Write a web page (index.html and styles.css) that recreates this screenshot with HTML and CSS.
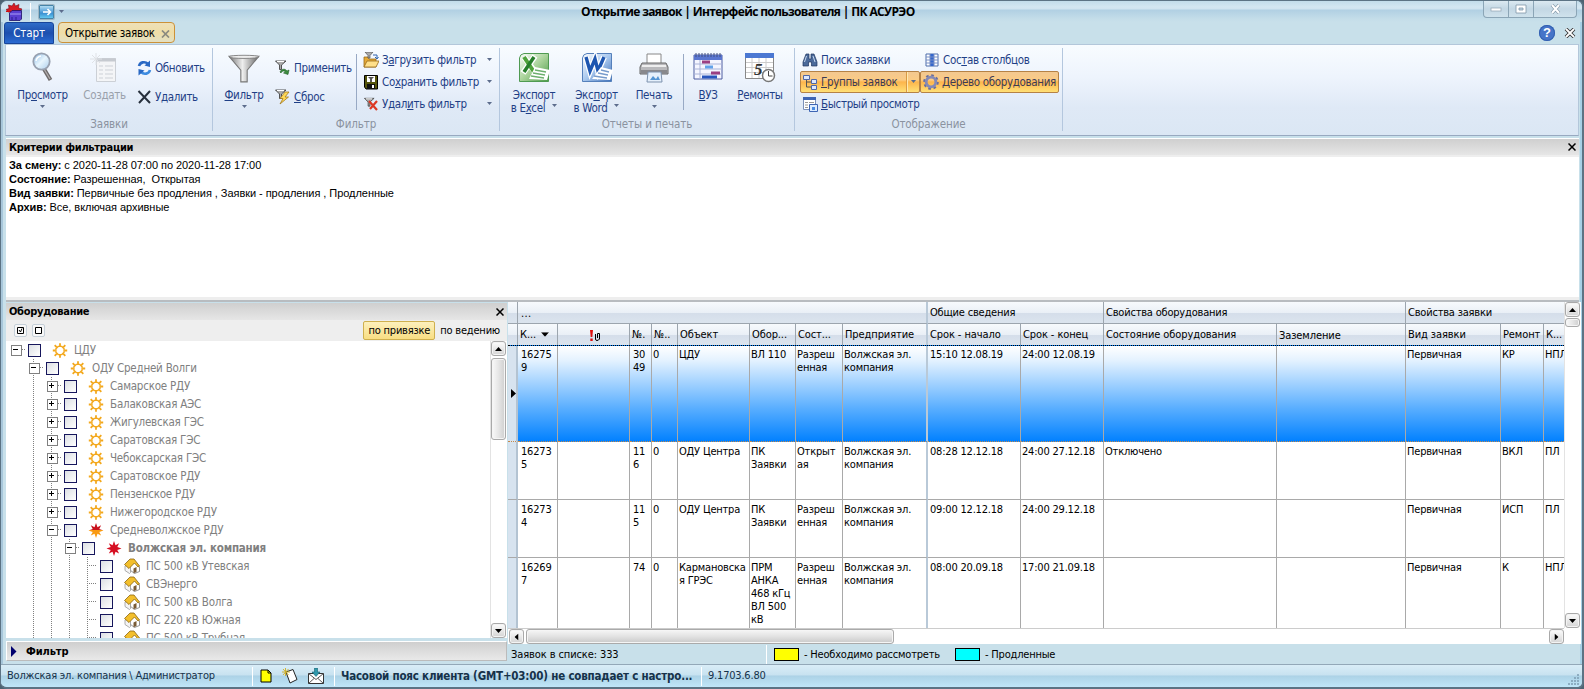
FILE: index.html
```html
<!DOCTYPE html>
<html lang="ru">
<head>
<meta charset="utf-8">
<title>Открытие заявок | Интерфейс пользователя | ПК АСУРЭО</title>
<link rel="stylesheet" href="styles.css">
</head>
<body>
<svg class="defs" width="0" height="0" aria-hidden="true">
  <defs>
    <linearGradient id="metal" x1="0" x2="1"><stop offset="0" stop-color="#777"/><stop offset=".45" stop-color="#eee"/><stop offset="1" stop-color="#666"/></linearGradient>
    <linearGradient id="glass" x1="0" y1="0" x2="1" y2="1"><stop offset="0" stop-color="#8bbce8"/><stop offset=".5" stop-color="#e8f5fd"/><stop offset="1" stop-color="#a9cdec"/></linearGradient>
    <linearGradient id="xl" x1="0" y1="0" x2="1" y2="1"><stop offset="0" stop-color="#fff"/><stop offset=".5" stop-color="#a9d39a"/><stop offset="1" stop-color="#4c9a49"/></linearGradient>
    <linearGradient id="wd" x1="0" y1="0" x2="1" y2="1"><stop offset="0" stop-color="#fff"/><stop offset=".5" stop-color="#a9c8ee"/><stop offset="1" stop-color="#3e6fb8"/></linearGradient>
    <linearGradient id="duo" x1="0" y1="0" x2="0" y2="1"><stop offset=".5" stop-color="#c8101c"/><stop offset=".5" stop-color="#f99a12"/></linearGradient>
    <symbol id="sun" viewBox="0 0 15 15"><path d="M7.500 3V.3m0 11.700v2.700M3 7.500H.3M12 7.500h2.700M4.300 4.300 2.200 2.200m8.500 8.500 2.100 2.100m-8.500-2.100-2.100 2.100m8.500-8.500 2.100-2.100" stroke="#f3a81c" stroke-width="1.800"/><path d="M5.700 3.400h3.600l2.300 2.300v3.600l-2.300 2.300H5.700L3.400 9.300V5.700Z" fill="#fff" stroke="#f3a81c" stroke-width="1.400"/></symbol>
    <symbol id="star" viewBox="0 0 15 15"><path d="M7.500 0 9 4.200 12.600 2.300 10.800 6 15 7.500 10.800 9 12.600 12.600 9 10.800 7.500 15 6 10.800 2.300 12.600 4.200 9 0 7.500 4.200 6 2.300 2.300 6 4.200Z"/></symbol>
    <symbol id="house" viewBox="0 0 16 16"><path d="M6 8 11 4 15.500 9v4.500l-5 2L6 12Z" fill="#fff" stroke="#777" stroke-width=".8"/><path d="M1 8v4.500l4.500 3 1-1V10L4 7Z" fill="#f4f4f4" stroke="#999" stroke-width=".8"/><path d="M.5 6.500 6 1h4L15.500 8 14 9 10.500 5 5 10.500Z" fill="#f3bf2c" stroke="#8a6410" stroke-width=".8"/><path d="M9.500 10.500 12.500 9v5l-3 1.200Z" fill="#795b35"/></symbol>
    <symbol id="funnel" viewBox="0 0 30 28"><path d="M1 2 12 15v11h6V15L29 2Z" fill="url(#metal)" stroke="#777"/><ellipse cx="15" cy="2.500" rx="14" ry="1.500" fill="#eee" stroke="#777" stroke-width=".8"/></symbol>
    <symbol id="fun" viewBox="0 0 12 10"><path d="M.5 1 4.500 5v4.500h2V5L11 1Z" fill="#aaa" stroke="#444" stroke-width=".9"/><path d="M2 1.500h7" stroke="#fff"/></symbol>
    <symbol id="down" viewBox="0 0 5 4"><path d="M0 0h5L2.500 3Z" fill="#5c6c8c"/></symbol>
    <symbol id="tri" viewBox="0 0 7 4"><path d="M0 4h7L3.500 0Z"/></symbol>
    <symbol id="cross" viewBox="0 0 8 8"><path d="m.5.5 7 7m0-7-7 7" fill="none" stroke="#000" stroke-width="1.500"/></symbol>
  </defs>
</svg>
<div class="window">
  <header class="titlebar">
    <div class="quick">
      <svg width="17" height="18" viewBox="0 0 17 18"><path d="m8 0 1.500 3L13 1.500 12.500 5 16 6l-2.500 3H2L0 6.500 3 5.500 2.500 2 6 3Z" fill="#d61a22" stroke="#7c0c18" stroke-width=".6"/><path d="M0 8.500h4" stroke="#c11"/><path d="M3.500 10 6 7.500h9.500V16l-1.500 1.500H3.500Z" fill="#5a3fd0" stroke="#1c1266" stroke-width=".8"/><path d="M4 11h11" stroke="#a99cf4"/><path d="M6 14v3m4-3v3" stroke="#2a1a90"/></svg>
      <span class="vline"></span>
      <span class="quick-btn"><svg width="12" height="10" viewBox="0 0 12 10"><path d="M2 5h7M6.500 2l3 3-3 3" fill="none" stroke="#fff" stroke-width="1.600"/></svg></span>
      <svg width="5" height="4"><use href="#down"/></svg>
    </div>
    <h1 class="title">Открытие заявок | Интерфейс пользователя | ПК АСУРЭО</h1>
    <div class="sysbuttons">
      <span class="sys"><svg width="12" height="5"><rect x="1" y="1" width="10" height="3" fill="#fff" stroke="#98abb9" stroke-width=".8"/></svg></span>
      <span class="sys"><svg width="12" height="10"><path d="M1 1h10v8H1Zm3 3v2h4V4Z" fill="#fff" fill-rule="evenodd" stroke="#8297a8" stroke-width=".8"/></svg></span>
      <span class="sys wide"><svg width="11" height="10"><path d="m2 1 7 8m0-8L2 9" stroke="#8297a8" stroke-width="3.400"/><path d="m2 1 7 8m0-8L2 9" stroke="#fff" stroke-width="2"/></svg></span>
    </div>
  </header>
  <nav class="tabs">
    <span class="tab-start">Старт</span>
    <span class="tab-page">Открытие заявок<svg width="9" height="8" viewBox="0 0 9 8"><path d="m1 .5 7 7m0-7-7 7" stroke="#8a8a80" stroke-width="1.700"/></svg></span>
    <span class="tabs-end">
      <span class="help">?</span>
      <svg width="12" height="10" viewBox="0 0 12 10"><path d="m2 1 8 8m0-8L2 9" stroke="#333" stroke-width="3.600"/><path d="m2 1 8 8m0-8L2 9" stroke="#fff" stroke-width="1.800"/></svg>
    </span>
  </nav>

  <section class="ribbon">
    <div class="group g-orders">
      <div class="tools">
        <div class="big b-view"><svg width="32" height="31" viewBox="0 0 32 31"><path d="m17 17 6.500 11" stroke="#6e6a6a" stroke-width="4"/><path d="m17 17 6 10" stroke="#b3aeae" stroke-width="1.300"/><circle cx="14.500" cy="9.500" r="8.200" fill="url(#glass)" stroke="#98a1b0" stroke-width="1.800"/><path d="M9 9a6 6 0 0 1 5-5" stroke="#fff" stroke-width="1.500" fill="none"/></svg><span>Пр<u>о</u>смотр</span><svg class="arr" width="5" height="4"><use href="#down"/></svg></div>
        <div class="big b-new off"><svg width="32" height="31" viewBox="0 0 32 31"><path d="M7.500 6.500h19v23h-19Z" fill="#f4f5f7" stroke="#ccd0d6"/><path d="M7 8h20" stroke="#c6cad0" stroke-width="3"/><path d="M10 14h4m2 0h8m-14 4h4m2 0h8m-14 4h4m2 0h8m-14 4h4m2 0h8" stroke="#cdd1d7"/><path d="M7 1v12M1 7h12M3 3l8 8m0-8-8 8" stroke="#dfe2e6"/></svg><span>Создать</span></div>
        <div class="pair p1">
          <div class="small"><svg width="15" height="16" viewBox="0 0 15 16"><path d="M2 6C3 2 8 1 11 4" fill="none" stroke="#2a69c4" stroke-width="2.600"/><path d="M13 .5V7L7.500 5.500Z" fill="#2a69c4"/><path d="M13 10c-1 4-6 5-9 2" fill="none" stroke="#3d8be0" stroke-width="2.600"/><path d="M1.500 15.500V9L7.500 10.500Z" fill="#2a69c4"/></svg><span>Обновить</span></div>
          <div class="small"><svg width="15" height="14" viewBox="0 0 15 14"><path d="m1.500 1 11.500 12M13 1 2 13" stroke="#27303c" stroke-width="2"/></svg><span>Удалить</span></div>
        </div>
      </div>
      <div class="caption">Заявки</div>
    </div>
    <div class="group g-filter">
      <div class="tools">
        <div class="big b-filter"><svg width="32" height="31" viewBox="0 -2 30 29"><use href="#funnel" width="30" height="28"/></svg><span><u>Ф</u>ильтр</span><svg class="arr" width="5" height="4"><use href="#down"/></svg></div>
        <div class="pair p2">
          <div class="small"><svg width="16" height="16"><use href="#fun" width="12" height="10"/><path d="M5 12c1-3 5-4 7-1l2-1-1 4.500L8.500 13l2-1C9 10 7 11 6 13Z" fill="#3b8d3e" stroke="#215f25" stroke-width=".6"/></svg><span>Применить</span></div>
          <div class="small"><svg width="16" height="16"><use href="#fun" width="12" height="10"/><path d="M10 3 5 9.500h3L5 15l8.500-7H10L14 3Z" fill="#ffd956" stroke="#a47a1d" stroke-width=".8"/></svg><span><u>С</u>брос</span></div>
        </div>
        <span class="inner-sep"></span>
        <div class="triple t1">
          <div class="small"><svg width="16" height="16"><path d="M1 5h4l1 2h7v8H1Z" fill="#e5a936" stroke="#98691a" stroke-width=".8"/><path d="M1 15 4 9h12l-3 6Z" fill="#ffe08a" stroke="#98691a" stroke-width=".8"/><path d="M2 0h8L7 3.500V6H5V3.500Z" fill="#aaa" stroke="#555" stroke-width=".7"/><path d="M10 3h4v3m-2-1 2 2 1.500-2" stroke="#2e63ad" fill="none"/></svg><span>З<u>а</u>грузить фильтр</span><svg class="more" width="5" height="4"><use href="#down"/></svg></div>
          <div class="small"><svg width="16" height="16"><path d="M1.500 1.500h13v13.500H3L1.500 13Z" fill="#55550c" stroke="#000"/><path d="M4 2h8v6H4Z" fill="#fff"/><path d="M5 3h6L9 5v3H7V5Z" fill="#555"/><path d="M4 10h8v5H4Z" fill="#111"/><path d="M9 11h2v3H9Z" fill="#fff"/></svg><span>Со<u>х</u>ранить фильтр</span><svg class="more" width="5" height="4"><use href="#down"/></svg></div>
          <div class="small"><svg width="16" height="16"><use href="#fun" x="1" y="1" width="11" height="10"/><path d="m6 5 8 9m0-9-7 8" stroke="#dc3824" stroke-width="2.200"/></svg><span>Удал<u>и</u>ть фильтр</span><svg class="more" width="5" height="4"><use href="#down"/></svg></div>
        </div>
      </div>
      <div class="caption">Фильтр</div>
    </div>
    <div class="group g-reports">
      <div class="tools">
        <div class="big b-xl"><svg width="32" height="31" viewBox="0 0 32 31"><path d="M6 1.500h24.500v28h-29V6Q2 2 6 1.500Z" fill="url(#xl)" stroke="#4f9a52"/><path d="m6 5 11 15M17 4 5 21" stroke="#fff" stroke-width="6"/><path d="m6 5 10 15" stroke="#4fa33b" stroke-width="4"/><path d="M16 5 6 20" stroke="#277f2b" stroke-width="3.500"/><path d="m17 15 15 3-3 10-18-1Z" fill="#fff"/><path d="m17 18 11 2m-13 1 12 2m-14 1 13 2" stroke="#6db06e" stroke-width="1.300"/></svg><span>Экспорт<br>в E<u>x</u>cel<svg class="after" width="5" height="4"><use href="#down"/></svg></span></div>
        <div class="big b-wd"><svg width="32" height="31" viewBox="0 0 32 31"><path d="M6 1.500h24.500v28h-29V6Q2 2 6 1.500Z" fill="url(#wd)" stroke="#5580bb"/><path d="M5 5 9 19l5-12 3 12 6-14" fill="none" stroke="#fff" stroke-width="6"/><path d="M5 5 9 19l5-12 3 12 6-14" fill="none" stroke="#1e56b0" stroke-width="3.400"/><path d="m20 15 12 3-3 10-18-1Z" fill="#fff"/><path d="m20 18 8 2m-11 1 10 2m-14 1 13 2" stroke="#779bcc" stroke-width="1.300"/></svg><span>Экс<u>п</u>орт<br>в Word<svg class="after" width="5" height="4"><use href="#down"/></svg></span></div>
        <div class="big b-print"><svg width="32" height="31" viewBox="0 0 32 31"><path d="M9 2h14v10H9Z" fill="#fff" stroke="#888"/><path d="M4 11h24l2 4v7H2v-7Z" fill="#b9b9bc" stroke="#666"/><path d="M4 14h24" stroke="#eee" stroke-width="2"/><path d="M3 18h26v4H3Z" fill="#88888c"/><path d="M10 20h13l1 10H9Z" fill="#e5f0fc" stroke="#7c91ad"/><path d="m12 28 3-4 3 3 2-3 2 4Z" fill="#5495d4"/></svg><span>Печать</span><svg class="arr" width="5" height="4"><use href="#down"/></svg></div>
        <span class="inner-sep s2"></span>
        <div class="big b-vuz"><svg width="32" height="31" viewBox="0 0 32 31"><path d="M2 3h28v24H2Z" fill="#f5f6ff" stroke="#4c5da0"/><path d="M2 3h28v5H2Z" fill="#5a76d0"/><path d="M4 1v4m3-4v4m3-4v4m3-4v4m3-4v4m3-4v4m3-4v4m3-4v4m3-4v4" stroke="#425083"/><path d="M2 12h28M2 17h28M2 22h28M8 8v19" stroke="#aab4d8"/><path d="M10 10h8m1 11h9" stroke="#9b3f82" stroke-width="3"/><path d="M13 15h8" stroke="#62a2ea" stroke-width="3"/><path d="M10 25h15" stroke="#2855bd" stroke-width="3"/></svg><span><u>В</u>УЗ</span></div>
        <div class="big b-rep"><svg width="32" height="31" viewBox="0 0 32 31"><path d="M1.500 1.500h28v25h-28Z" fill="#fff" stroke="#888"/><path d="M1 1h29v5H1Z" fill="#4b78d2"/><path d="M2 10.500h27m-27 5h27m-27 5h27M8 6v20m7-20v20m7-20v20" stroke="#ccc"/><text x="10" y="23" class="cal-num">5</text><circle cx="24.500" cy="23.500" r="6" fill="#fff" stroke="#777" stroke-width="1.500"/><path d="M24.500 19v5h4" fill="none" stroke="#444"/></svg><span><u>Р</u>емонты</span></div>
      </div>
      <div class="caption">Отчеты и печать</div>
    </div>
    <div class="group g-view">
      <div class="tools">
        <div class="triple t2">
          <div class="small"><svg width="16" height="16"><path d="M4 2h3v5h2V2h3l3 8v4H9.500v-4h-3v4H1v-4Z" fill="#4b6a9a" stroke="#1f355e" stroke-width=".7"/><path d="m4.500 4-2 6m8.500-6 2 6" stroke="#c4d7f0"/></svg><span>Поиск заявки</span></div>
          <div class="small on"><svg width="16" height="16"><path d="M4.500 5v8H9M4.500 8H9" fill="none" stroke="#555"/><path d="M1.500 1.500h6v4h-6ZM9.500 5.500h5v4h-5Zm0 6h5v4h-5Z" fill="#dce8ff" stroke="#5067a5"/></svg><span><u>Г</u>руппы заявок</span><span class="split"><svg width="5" height="4"><use href="#down"/></svg></span></div>
          <div class="small"><svg width="16" height="16"><path d="M1.500 1.500h12v12h-12Z" fill="#fff" stroke="#7b91bb"/><path d="M1 1h13v3H1Z" fill="#3e65b4"/><path d="M3 6.500h3m1 0h5m-9 2.500h3m-3 2.500h3" stroke="#999"/><path d="M7.500 8.500h8v7h-8Z" fill="#dcecff" stroke="#3e65b4"/><path d="M10 11h3v3h-3Z" fill="#4b8be0"/></svg><span><u>Б</u>ыстрый просмотр</span></div>
        </div>
        <div class="triple t3">
          <div class="small"><svg width="16" height="16"><path d="M2 2h12v12H2Z" fill="#fff" stroke="#4d6cab"/><path d="M6 2h4v12H6Z" fill="#3467cc"/><path d="M2 5h12M2 8h12M2 11h12M6 2v12m4-12v12" stroke="#7890c6"/></svg><span>Сос<u>т</u>ав столбцов</span></div>
          <div class="small on"><svg width="16" height="16"><circle cx="8" cy="8" r="6.800" fill="none" stroke="#6a6f9c" stroke-width="2" stroke-dasharray="2.700 2.640"/><circle cx="8" cy="8" r="4.800" fill="none" stroke="#8589b5" stroke-width="2.800"/></svg><span><u>Д</u>ерево оборудования</span></div>
        </div>
      </div>
      <div class="caption">Отображение</div>
    </div>
  </section>

  <section class="criteria">
    <div class="panel-head"><span>Критерии фильтрации</span><svg width="8" height="8"><use href="#cross"/></svg></div>
    <div class="criteria-body">
      <div><b>За смену:</b> с 2020-11-28 07:00 по 2020-11-28 17:00</div>
      <div><b>Состояние:</b> Разрешенная,&nbsp; Открытая</div>
      <div><b>Вид заявки:</b> Первичные без продления , Заявки - продления , Продленные</div>
      <div><b>Архив:</b> Все, включая архивные</div>
    </div>
  </section>

  <main class="work">
    <aside class="equip">
      <div class="panel-head"><span>Оборудование</span><svg width="8" height="8"><use href="#cross"/></svg></div>
      <div class="equip-tools">
        <span class="mini"><svg width="7" height="7"><path d="M.5.5h6v6h-6Z" fill="#fff" stroke="#000"/><path d="m2 3 1.500 2L5 1.500" fill="none" stroke="#000"/></svg></span>
        <span class="mini"><svg width="7" height="7"><path d="M.5.5h6v6h-6Z" fill="#fff" stroke="#000"/></svg></span>
        <span class="mode active">по привязке</span><span class="mode">по ведению</span>
      </div>
      <div class="tree-box">
        <div class="tree">
          <div class="node"><i class="ex m"></i><i class="ck"></i><svg width="15" height="15"><use href="#sun"/></svg><span>ЦДУ</span></div>
          <div class="node"><i></i><i class="ex m b"></i><i class="ck"></i><svg width="15" height="15"><use href="#sun"/></svg><span>ОДУ Средней Волги</span></div>
          <div class="node"><i></i><i class="v"></i><i class="ex b"></i><i class="ck"></i><svg width="15" height="15"><use href="#sun"/></svg><span>Самарское РДУ</span></div>
          <div class="node"><i></i><i class="v"></i><i class="ex v"></i><i class="ck"></i><svg width="15" height="15"><use href="#sun"/></svg><span>Балаковская АЭС</span></div>
          <div class="node"><i></i><i class="v"></i><i class="ex v"></i><i class="ck"></i><svg width="15" height="15"><use href="#sun"/></svg><span>Жигулевская ГЭС</span></div>
          <div class="node"><i></i><i class="v"></i><i class="ex v"></i><i class="ck"></i><svg width="15" height="15"><use href="#sun"/></svg><span>Саратовская ГЭС</span></div>
          <div class="node"><i></i><i class="v"></i><i class="ex v"></i><i class="ck"></i><svg width="15" height="15"><use href="#sun"/></svg><span>Чебоксарская ГЭС</span></div>
          <div class="node"><i></i><i class="v"></i><i class="ex v"></i><i class="ck"></i><svg width="15" height="15"><use href="#sun"/></svg><span>Саратовское РДУ</span></div>
          <div class="node"><i></i><i class="v"></i><i class="ex v"></i><i class="ck"></i><svg width="15" height="15"><use href="#sun"/></svg><span>Пензенское РДУ</span></div>
          <div class="node"><i></i><i class="v"></i><i class="ex v"></i><i class="ck"></i><svg width="15" height="15"><use href="#sun"/></svg><span>Нижегородское РДУ</span></div>
          <div class="node"><i></i><i class="v"></i><i class="ex m v"></i><i class="ck"></i><svg class="half" width="15" height="15"><use href="#star"/></svg><span>Средневолжское РДУ</span></div>
          <div class="node strong"><i></i><i class="v"></i><i class="v"></i><i class="ex m b"></i><i class="ck"></i><svg class="red" width="15" height="15"><use href="#star"/></svg><span>Волжская эл. компания</span></div>
          <div class="node"><i></i><i class="v"></i><i class="v"></i><i class="v"></i><i class="v h"></i><i class="ck"></i><svg width="16" height="16"><use href="#house"/></svg><span>ПС 500 кВ Утевская</span></div>
          <div class="node"><i></i><i class="v"></i><i class="v"></i><i class="v"></i><i class="v h"></i><i class="ck"></i><svg width="16" height="16"><use href="#house"/></svg><span>СВЭнерго</span></div>
          <div class="node"><i></i><i class="v"></i><i class="v"></i><i class="v"></i><i class="v h"></i><i class="ck"></i><svg width="16" height="16"><use href="#house"/></svg><span>ПС 500 кВ Волга</span></div>
          <div class="node"><i></i><i class="v"></i><i class="v"></i><i class="v"></i><i class="v h"></i><i class="ck"></i><svg width="16" height="16"><use href="#house"/></svg><span>ПС 220 кВ Южная</span></div>
          <div class="node"><i></i><i class="v"></i><i class="v"></i><i class="v"></i><i class="v h"></i><i class="ck"></i><svg width="16" height="16"><use href="#house"/></svg><span>ПС 500 кВ Трубная</span></div>
        </div>
        <div class="vscroll tree-vs">
          <span class="sb"><svg width="7" height="4"><use href="#tri"/></svg></span>
          <span class="thumb t-tree"></span>
          <span class="sb end"><svg class="flip" width="7" height="4"><use href="#tri"/></svg></span>
        </div>
      </div>
      <div class="filter-bar"><svg width="6" height="11"><path d="M0 0 5.500 5.500 0 11Z" fill="#00006e"/></svg><span>Фильтр</span></div>
    </aside>

    <section class="list">
      <div class="grid-box">
        <div class="grid">
          <div class="row bands"><span></span><span class="dots">...</span><span>Общие сведения</span><span>Свойства оборудования</span><span>Свойства заявки</span></div>
          <div class="row heads"><span></span><span>К...<svg class="flip sort" width="8" height="5" viewBox="0 0 7 4"><use href="#tri"/></svg></span><span class="marks"><svg width="12" height="12"><path d="M1 0h3L3.300 7H1.700ZM1.300 8.500h2.400V11H1.300Z" fill="#e01010"/><path d="M6.500 4v5q0 1.500 1.500 1.500t2.500-1.500V3.500h-2V8" fill="none" stroke="#000" stroke-width="1"/></svg></span><span>№.</span><span>№..</span><span>Объект</span><span>Обор...</span><span>Сост...</span><span>Предприятие</span><span>Срок - начало</span><span>Срок - конец</span><span>Состояние оборудования</span><span class="low">Заземление</span><span>Вид заявки</span><span>Ремонт</span><span>К...</span></div>
          <div class="row data sel"><span><svg width="5" height="9"><path d="M0 0 5 4.500 0 9Z"/></svg></span><span>16275<br>9</span><span></span><span>30<br>49</span><span>0</span><span>ЦДУ</span><span>ВЛ 110</span><span>Разреш<br>енная</span><span>Волжская эл.<br>компания</span><span>15:10 12.08.19</span><span>24:00 12.08.19</span><span></span><span></span><span>Первичная</span><span>КР</span><span>НПЛ</span></div>
          <div class="row data"><span></span><span>16273<br>5</span><span></span><span>11<br>6</span><span>0</span><span>ОДУ Центра</span><span>ПК<br>Заявки</span><span>Открыт<br>ая</span><span>Волжская эл.<br>компания</span><span>08:28 12.12.18</span><span>24:00 27.12.18</span><span>Отключено</span><span></span><span>Первичная</span><span>ВКЛ</span><span>ПЛ</span></div>
          <div class="row data"><span></span><span>16273<br>4</span><span></span><span>11<br>5</span><span>0</span><span>ОДУ Центра</span><span>ПК<br>Заявки</span><span>Разреш<br>енная</span><span>Волжская эл.<br>компания</span><span>09:00 12.12.18</span><span>24:00 29.12.18</span><span></span><span></span><span>Первичная</span><span>ИСП</span><span>ПЛ</span></div>
          <div class="row data last"><span></span><span>16269<br>7</span><span></span><span>74</span><span>0</span><span>Кармановска<br>я ГРЭС</span><span>ПРМ<br>АНКА<br>468 кГц<br>ВЛ 500<br>кВ<br>Б</span><span>Разреш<br>енная</span><span>Волжская эл.<br>компания</span><span>08:00 20.09.18</span><span>17:00 21.09.18</span><span></span><span></span><span>Первичная</span><span>К</span><span>НПЛ</span></div>
          <div class="hscroll">
            <span class="sb"><svg class="left" width="7" height="4"><use href="#tri"/></svg></span>
            <span class="thumb"></span>
            <span class="sb end"><svg class="right" width="7" height="4"><use href="#tri"/></svg></span>
          </div>
        </div>
        <div class="vscroll grid-vs">
          <span class="sb"><svg width="7" height="4"><use href="#tri"/></svg></span>
          <span class="thumb t-grid"></span>
          <span class="sb end"><svg class="flip" width="7" height="4"><use href="#tri"/></svg></span>
        </div>
      </div>
      <div class="legend">
        <span class="count">Заявок в списке: 333</span>
        <span class="swatch yellow"></span><span class="lg1">- Необходимо рассмотреть</span>
        <span class="swatch cyan"></span><span>- Продленные</span>
      </div>
    </section>
  </main>

  <footer class="status">
    <span class="who">Волжская эл. компания \ Администратор</span>
    <span class="icons">
      <svg width="12" height="14"><path d="M1 1h7l3 3v9H1Z" fill="#ff0" stroke="#000"/><path d="M8 1v3h3" fill="none" stroke="#000"/></svg>
      <svg width="16" height="16"><path d="m4 4 7-2.500 4 10-7 3.500Z" fill="#fff" stroke="#222"/><path d="M3.500 0v8M0 4h8M1 1l5.500 6M6.500 1 1 7" stroke="#cfae20" stroke-width=".9"/></svg>
      <svg width="16" height="16"><path d="M.5 5.500h15v10H.5Z" fill="#fff" stroke="#333"/><path d="m.5 5.500 7.500 6 7.500-6M.5 15.500l5.500-5m9.500 5-5.500-5" fill="none" stroke="#555"/><path d="M6.500 0h3v4H12L8 8.500 4 4h2.500Z" fill="#2f98ab" stroke="#13606f" stroke-width=".6"/></svg>
    </span>
    <span class="tz">Часовой пояс клиента (GMT+03:00) не совпадает с настро...</span>
    <span class="ver">9.1703.6.80</span>
    <svg class="grip" width="11" height="11"><path d="M9 1h2M6 4h2m1 0h2M3 7h2m1 0h2m1 0h2M0 10h2m1 0h2m1 0h2m1 0h2" stroke="#7d9db2" stroke-width="1.500"/></svg>
  </footer>
</div>
</body>
</html>
```
FILE: styles.css
```css
* { box-sizing: border-box; }
body {
  margin: 0;
  background: #4d6372;
  font: 11px/13px "DejaVu Sans Condensed", "DejaVu Sans", sans-serif;
  letter-spacing: -0.2px;
  color: #000;
}
svg { display: block; flex: none; }
.defs { position: absolute; }
.window {
  width: 1584px; height: 689px;
  display: flex; flex-direction: column;
  padding: 0 3px 1px 4px;
  border: 1px solid #5c7384; border-right-width: 2px; border-bottom-width: 2px;
  border-radius: 7px;
  background: #c8e0ea;
  overflow: hidden;
  box-shadow: inset 2px 0 #a7c6da, inset -2px 0 #a7d0e6;
}

/* title and tabs */
.titlebar {
  height: 21px; flex: none; margin: 0 -3px 0 -4px; padding-left: 5px;
  display: flex;
  background: linear-gradient(#c2dcea 0, #d3e6f1 6px, #cfe3ef 8px, #b1d0e3 9px, #c4dde9 18px, #c8e0ea);
}
.quick { display: flex; align-items: center; gap: 6px; width: 575px; flex: none; padding-top: 1px; }
.vline { width: 1px; height: 18px; margin: 0 2px 0 1px; background: #fff; }
.quick-btn {
  width: 15px; height: 14px; display: grid; place-items: center;
  border: 1px solid #4684a8; border-radius: 1px; box-shadow: 0 0 0 1px #9eb6c4;
  background: linear-gradient(#b1dcf2, #3c90d2 60%, #63c8f0);
}
.quick-btn + svg { margin-left: -1px; }
.title { margin: 0; padding-top: 3px; font: bold 12px/15px "Open Sans", "Noto Sans", sans-serif; letter-spacing: -0.64px; white-space: nowrap; }
.sysbuttons {
  display: flex; width: 94px; height: 17px; margin: 0 5px 0 auto;
  border: 1px solid #8ba5b6; border-top: 0; border-radius: 0 0 4px 4px;
  background: linear-gradient(#dbe9f1, #c3d7e4 50%, #cfe2ec);
}
.sys { width: 25px; display: grid; place-items: center; border-right: 1px solid #8ba5b6; }
.sys.wide { width: 42px; border: 0; }
.tabs { height: 22px; flex: none; display: flex; align-items: flex-start; margin-left: -1px; font-size: 12px; letter-spacing: -0.1px; }
.tab-start {
  width: 50px; height: 22px; padding-top: 4px; text-align: center; color: #fff;
  border: 1px solid #17459a; border-radius: 3px 3px 0 0; font-size: 11.500px;
  background: linear-gradient(#2f6dc8, #1c4fae 50%, #2a6bd2);
}
.tab-page {
  display: flex; align-items: center; justify-content: space-between;
  width: 117px; height: 21px; margin-left: 4px; padding: 2px 4px 0 6px; white-space: nowrap;
  border: 1px solid #cc9138; border-radius: 4px; font-size: 11.500px; letter-spacing: -0.3px;
  background: linear-gradient(#eee0b8, #efdda6 50%, #e2e0c4);
}
.tabs-end { display: flex; align-items: center; gap: 9px; margin-left: auto; padding: 3px 3px 0 0; }
.help {
  width: 16px; height: 16px; border-radius: 50%; text-align: center; color: #fff; font: bold 13px/16px "Liberation Sans", sans-serif;
  background: #4674c8; box-shadow: inset 0 0 0 1px #3260b0;
}

/* ribbon */
.ribbon {
  height: 92px; flex: none; display: flex;
  border: 1px solid #b3c7da; border-bottom: 1px solid #98a9c0;
  background: linear-gradient(#f8fcff, #eef4fd 35%, #dfe9f6 70%, #dbe7f4);
  color: #1f3f86; font-size: 11.500px; line-height: 13px; letter-spacing: -0.34px; white-space: nowrap;
}
.group { display: flex; flex-direction: column; border-right: 1px solid #b4c7de; margin: 3px 0 4px; height: 83px; flex: none; }
.g-orders { width: 207px; }
.g-filter { width: 287px; }
.g-reports { width: 295px; }
.g-view { width: 268px; }
.tools { display: flex; height: 69px; }
.caption { text-align: center; color: #8b93a0; line-height: 14px; letter-spacing: -0.1px; }
.big { display: flex; flex-direction: column; align-items: center; text-align: center; padding-top: 4px; flex: none; }
.big > span { margin-top: 6px; }
.big .arr { margin-top: 3px; }
.big > svg:first-child { width: 32px; height: 31px; }
.off { color: #9aa1ab; }
.b-view { width: 73px; } .b-new { width: 51px; }
.b-filter { width: 62px; }
.b-xl { width: 68px; } .b-wd { width: 57px; } .b-print { width: 58px; }
.b-vuz { width: 48px; } .b-rep { width: 56px; }
.after { display: inline-block; margin: 0 0 4px 7px; }
.cal-num { font: italic bold 17px "Liberation Serif", serif; fill: #333; }
.small { display: flex; align-items: center; height: 22px; gap: 3px; }
.pair { padding-top: 9px; display: flex; flex-direction: column; gap: 7px; flex: none; }
.p1 { padding-left: 7px; }
.p2 { width: 81px; }
.triple { padding-top: 1px; flex: none; }
.inner-sep { width: 1px; height: 56px; margin: 6px 6px 0 0; background: #98a9c4; flex: none; }
.t1 .small { width: 129px; }
.more { margin-left: auto; }
.s2 { margin: 6px 0 0 0; }
.t2 { width: 125px; padding-left: 5px; }
.t2 .small { padding-left: 2px; }
.t3 .small { padding-left: 4px; width: 139px; }
.on { border: 1px solid #b58246; border-radius: 2px; color: #3d3b55; background: linear-gradient(#f3c890, #fbcb84 40%, #fdb54c 50%, #ffe076); }
.t2 .on { width: 120px; padding-left: 1px; }
.t3 .on { padding-left: 2px; }
.split { margin-left: auto; width: 13px; height: 20px; display: grid; place-items: center; border-left: 1px solid #d99a44; box-shadow: inset 1px 0 #ffe9b0; }

/* criteria */
.criteria { height: 164px; flex: none; margin-top: 2px; border-top: 1px solid #fff; border-bottom: 2px solid #b8bcc0; background: #fff; margin-left: 1px; }
.panel-head {
  height: 16px; display: flex; align-items: center; justify-content: space-between; padding: 0 3px;
  font-weight: bold; letter-spacing: -0.3px;
  background: linear-gradient(#cfcfcf, #e6e6e6);
}
.criteria-body { height: 145px; padding: 3px; font: 11px/14px "Liberation Sans", Arial, sans-serif; letter-spacing: -0.05px; border-bottom: 3px solid #eee; box-shadow: inset 0 2px #eee; }

/* equipment tree */
.work { display: flex; height: 362px; flex: none; }
.equip { width: 502px; display: flex; flex-direction: column; padding-left: 1px; flex: none; }
.equip .panel-head { margin-top: 1px; height: 17px; flex: none; }
.equip-tools { height: 21px; flex: none; display: flex; align-items: center; gap: 5px; padding: 0 7px 0 8px; background: #eee; }
.mini { width: 13px; height: 13px; display: grid; place-items: center; border: 1px solid #c5cfd8; border-radius: 2px; background: #f8f8f8; }
.mode { font-size: 11px; }
.mode.active { margin-left: auto; height: 19px; padding: 2px 4px; border: 1px solid #cfb04f; border-radius: 2px; background: linear-gradient(#fdf0bc, #f8de83); }
.tree-box { height: 297px; flex: none; display: flex; background: #fff; }
.tree { flex: 1; overflow: hidden; color: #808080; font-size: 11.500px; letter-spacing: -0.22px; padding-left: 1px; }
.node { display: flex; align-items: center; height: 18px; white-space: nowrap; }
.node i { width: 18px; height: 18px; flex: none; background: repeating-linear-gradient(#808080 0 1px, transparent 1px 2px) 8px 0 / 1px 18px no-repeat; }
.node i:first-child:not(.ex) { background: none; }
.node .ex {
  display: grid; place-items: center start; padding-left: 4px;
  background: repeating-linear-gradient(90deg, #808080 0 1px, transparent 1px 2px) 13px 8px / 5px 1px no-repeat;
}
.node .ex.v, .node .ex.b {
  background: repeating-linear-gradient(90deg, #808080 0 1px, transparent 1px 2px) 13px 8px / 5px 1px no-repeat, repeating-linear-gradient(#808080 0 1px, transparent 1px 2px) 8px 0 / 1px 18px no-repeat;
}
.node .ex::before {
  content: ""; width: 9px; height: 9px; border: 1px solid #808080;
  background: linear-gradient(#000, #000) 1px 3px / 5px 1px no-repeat, linear-gradient(#000, #000) 3px 1px / 1px 5px no-repeat, #fff;
}
.node .ex.m::before { background: linear-gradient(#000, #000) 1px 3px / 5px 1px no-repeat, #fff; }
.node i.h { background: repeating-linear-gradient(90deg, #808080 0 1px, transparent 1px 2px) 8px 8px / 10px 1px no-repeat, repeating-linear-gradient(#808080 0 1px, transparent 1px 2px) 8px 0 / 1px 18px no-repeat; }
.node .ck { width: 13px; height: 13px; margin: 0 11px 0 3px; border: 1px solid #16165c; background: linear-gradient(135deg, #dcdfe4, #fff) padding-box; }
.node .ck { background-size: 100% 100%; background-position: 0 0; }
.node svg { width: 16px; margin-right: 6px; }
.red { fill: #d60f22; }
.half { fill: url(#duo); }
.strong { font-weight: bold; font-size: 11.500px; letter-spacing: -0.2px; }

/* scrollbars */
.vscroll { width: 16px; flex: none; display: flex; flex-direction: column; background: #fff; border-left: 1px solid #e3e3e3; }
.tree-vs { width: 17px; }
.sb { width: 15px; height: 15px; flex: none; display: grid; place-items: center; border: 1px solid #a9a9a9; border-radius: 3px; background: linear-gradient(#fdfdfd, #d4d4d4); box-shadow: inset 0 0 0 1px #f3f3f3; }
.sb.end { margin-top: auto; }
.thumb { border: 1px solid #aaa; border-radius: 3px; background: linear-gradient(90deg, #fafafa, #e6e6e6 50%, #cfcfcf); box-shadow: inset 0 0 0 1px #f5f5f5; }
.t-tree { height: 82px; margin-top: 2px; width: 15px; }
.t-grid { height: 9px; margin-top: 1px; width: 15px; }
.grid-vs { height: 326px; }
.flip { transform: scaleY(-1); }
.left { transform: rotate(-90deg); }
.right { transform: rotate(90deg); }
.hscroll { height: 16px; display: flex; gap: 2px; background: #fff; padding-left: 1px; border-top: 1px solid #ccc; }
.hscroll .thumb { width: 368px; height: 15px; background: linear-gradient(#f6f6f6, #e2e2e2 50%, #c9c9c9); }
.hscroll .sb.end { margin: 0 0 0 auto; }
.filter-bar {
  height: 20px; margin-top: 3px; display: flex; align-items: center; gap: 9px; padding-left: 4px; font-weight: bold; font-size: 11px; letter-spacing: -0.1px;
  border: 1px solid #fff; border-right-color: #bbb; border-bottom-color: #bbb; background: linear-gradient(#cfcfcf, #e9e9e9);
}

/* order grid */
.list { width: 1073px; flex: none; margin-left: 1px; }
.grid-box { display: flex; height: 342px; background: #fff; }
.grid { width: 1056px; overflow: hidden; background: #fff; }
.row { display: grid; grid-template-columns: 10px 40px 72px 22px 26px 72px 46px 47px 85px 93px 83px 173px 129px 95px 43px 20px; white-space: nowrap; }
.row > span { border-right: 1px solid #9ca5ae; border-bottom: 1px solid #9ca5ae; padding: 0 2px; overflow: hidden; }
.row.bands { height: 22px; grid-template-columns: 10px 410px 176px 302px 158px; }
.bands > span, .heads > span { background: linear-gradient(#f7fafd, #e9eff6 52%, #d5deea 54%, #dbe4ee); padding: 4px 2px 0; }
.row > span:last-child { border-right: 0; }
.bands > span:nth-child(2), .row:not(.bands) > span:nth-child(9) { border-right: 2px solid #b9c9d8; }
.bands .dots { padding: 5px 3px; letter-spacing: 0.4px; }
.heads { height: 21px; letter-spacing: -0.1px; }
.heads > span { border-bottom: 0; display: flex; }
.heads .low { padding-top: 5px; }
.sort { margin: 4px 0 0 5px; }
.heads .marks { padding: 6px 0 0 31px; }
.data { height: 58px; }
.data > span { border-color: #a9a9a9; padding: 3px 0 0 1px; }
.data > span:nth-child(2), .data > span:nth-child(4) { padding-left: 3px; }
.data > span:nth-child(10) { padding-left: 2px; }
.data > span:first-child { background: #d7e3ef; border-right: 2px solid #b3c3d2; padding: 0 0 0 3px; display: flex; align-items: center; }
.sel { height: 97px; border-top: 1px dotted #000; background: linear-gradient(#fff, #e4f2ff 15%, #59aeff 65%, #0080ff); }
.sel > span { border-bottom: 1px dotted #c78a4a; padding-top: 2px; }
.last { height: 70px; }
.last > span { border-bottom: 0; }
.legend { height: 20px; display: flex; align-items: center; padding-left: 3px; }
.count { width: 256px; height: 19px; line-height: 19px; border-right: 1px solid #fff; letter-spacing: -0.1px; }
.swatch { width: 25px; height: 13px; border: 1px solid #000; margin: 0 5px 0 7px; }
.yellow { background: #ff0; }
.cyan { background: #0ff; }
.lg1 { width: 144px; white-space: nowrap; }

/* status bar */
.status {
  flex: 1; min-height: 0; display: flex; align-items: center; margin: 0 -3px -1px -4px; padding: 0 3px 0 6px;
  border-top: 1px solid #93a8b8; white-space: nowrap; color: #16324a;
  background: linear-gradient(#d9edf7, #c8e2f0 45%, #acd2e6 50%, #c0e6f8);
}
.status > span { height: 19px; line-height: 18px; border-right: 1px solid #fff; }
.who { width: 246px; }
.status > .icons { width: 82px; padding-left: 7px; display: flex; align-items: center; gap: 10px; }
.status > .tz { width: 367px; padding-left: 6px; font-weight: bold; font-size: 11.500px; }
.status > .ver { border: 0; padding-left: 6px; }
.grip { margin: 6px 0 0 auto; }
```
